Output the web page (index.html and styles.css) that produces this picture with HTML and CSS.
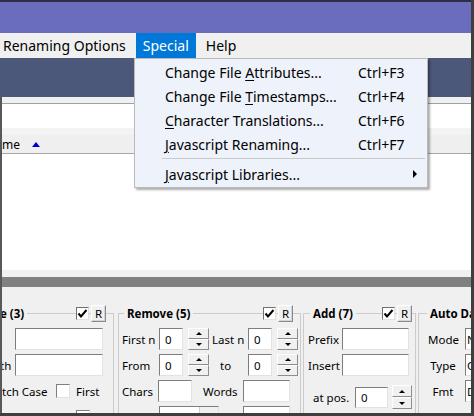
FILE: index.html
```html
<!DOCTYPE html>
<html>
<head>
<meta charset="utf-8">
<title>Bulk Rename</title>
<link rel="stylesheet" href="styles.css">
</head>
<body>
<div class="window">
  <div class="titlebar"></div>
  <div class="menubar">
    <span class="mitem">Renaming Options</span>
    <span class="mitem active">Special</span>
    <span class="mitem">Help</span>
  </div>
  <div class="toolband"></div>
  <div class="content">
    <div class="pathgap"></div>
    <div class="pathfield"></div>
    <div class="hdrgap"></div>
    <div class="listhdr"><span class="colname">me</span><span class="sort"></span></div>
    <div class="list"></div>
    <div class="splitgap"></div>
    <div class="splitter"></div>
    <div class="panel">
      <div class="groups">
        <div class="grp g1">
          <div class="ghead"><span class="gtitle">e (3)</span><span class="fill"></span><span class="chk"><svg width="13" height="13" viewBox="0 0 13 13"><path d="M2.5 6.5 L5 9.5 L10.5 3" fill="none" stroke="#000" stroke-width="2"/></svg></span><span class="rbtn">R</span></div>
          <div class="rows">
            <div class="row"><span class="lbl w15"></span><span class="inp w88"></span></div>
            <div class="row"><span class="lbl w15">th</span><span class="inp w88"></span></div>
            <div class="row"><span class="lbl w56 pl2">tch Case</span><span class="box"></span><span class="lbl ml6">First</span></div>
            <div class="row"><span class="lbl w76"></span><span class="box"></span></div>
          </div>
        </div>
        <div class="grp g2">
          <div class="ghead"><span class="gtitle">Remove (5)</span><span class="fill"></span><span class="chk"><svg width="13" height="13" viewBox="0 0 13 13"><path d="M2.5 6.5 L5 9.5 L10.5 3" fill="none" stroke="#000" stroke-width="2"/></svg></span><span class="rbtn">R</span></div>
          <div class="rows">
            <div class="row"><span class="lbl w37">First n</span><span class="inp w24">0</span><span class="spin"><span class="sb up"></span><span class="sb dn"></span></span><span class="lbl w39 pl3">Last n</span><span class="inp w24">0</span><span class="spin"><span class="sb up"></span><span class="sb dn"></span></span></div>
            <div class="row"><span class="lbl w37">From</span><span class="inp w24">0</span><span class="spin"><span class="sb up"></span><span class="sb dn"></span></span><span class="lbl w39 pl11">to</span><span class="inp w24">0</span><span class="spin"><span class="sb up"></span><span class="sb dn"></span></span></div>
            <div class="row"><span class="lbl w36">Chars</span><span class="inp w34"></span><span class="lbl w51 pl11">Words</span><span class="inp w47"></span></div>
            <div class="row"><span class="lbl w37"></span><span class="combo w60"><span class="ctext">Before</span><span class="cbtn"></span></span><span class="lbl w24"></span><span class="inp w47"></span></div>
          </div>
        </div>
        <div class="grp g3">
          <div class="ghead"><span class="gtitle">Add (7)</span><span class="fill"></span><span class="chk"><svg width="13" height="13" viewBox="0 0 13 13"><path d="M2.5 6.5 L5 9.5 L10.5 3" fill="none" stroke="#000" stroke-width="2"/></svg></span><span class="rbtn">R</span></div>
          <div class="rows">
            <div class="row"><span class="lbl w34">Prefix</span><span class="inp w67"></span></div>
            <div class="row"><span class="lbl w34">Insert</span><span class="inp w67"></span></div>
            <div class="row row-pos"><span class="lbl w47 pl5">at pos.</span><span class="inp w33 h21">0</span><span class="spin s20"><span class="sb up"></span><span class="sb dn"></span></span></div>
          </div>
        </div>
        <div class="grp g4">
          <div class="ghead"><span class="gtitle">Auto Da</span><span class="fill"></span></div>
          <div class="rows">
            <div class="row"><span class="lbl w30 ca">Mode</span><span class="inp w40 ml7 pl1">N</span></div>
            <div class="row"><span class="lbl w30 ca">Type</span><span class="inp w40 ml7 pl1">C</span></div>
            <div class="row"><span class="lbl w30 ca">Fmt</span><span class="inp w40 ml7 pl1">D</span></div>
          </div>
        </div>
      </div>
    </div>
  </div>
  <div class="dropdown">
    <div class="ditem"><span class="dl">Change File <u>A</u>ttributes...</span><span class="dk">Ctrl+F3</span><span class="dsub"></span></div>
    <div class="ditem"><span class="dl">Change File <u>T</u>imestamps...</span><span class="dk">Ctrl+F4</span><span class="dsub"></span></div>
    <div class="ditem"><span class="dl"><u>C</u>haracter Translations...</span><span class="dk">Ctrl+F6</span><span class="dsub"></span></div>
    <div class="ditem"><span class="dl"><u>J</u>avascript Renaming...</span><span class="dk">Ctrl+F7</span><span class="dsub"></span></div>
    <div class="dsep"></div>
    <div class="ditem"><span class="dl"><u>J</u>avascript Libraries...</span><span class="dk"></span><span class="dsub"><span class="arrow"></span></span></div>
  </div>
</div>
</body>
</html>
```

FILE: styles.css
```css
* { box-sizing: border-box; }
html, body { margin: 0; padding: 0; }
body {
  width: 474px;
  height: 416px;
  overflow: hidden;
  background: #f0f0f0;
  font-family: "Noto Sans", "Open Sans", sans-serif;
  color: #000;
}
.window {
  position: relative;
  width: 474px;
  height: 416px;
  display: flex;
  flex-direction: column;
  border-right: 3px solid #3e3e3e;
  border-bottom: 3px solid #3e3e3e;
  overflow: hidden;
}
.titlebar {
  flex: none;
  height: 33px;
  background: #6a6cbd;
  border-top: 2px solid #2d2d45;
}
.menubar {
  flex: none;
  height: 25px;
  background: #f0f0f0;
  display: flex;
  gap: 3px;
  margin-left: -4px;
  font-size: 14px;
}
.mitem {
  display: flex;
  align-items: center;
  padding: 0 7px;
  white-space: nowrap;
}
.mitem.active { background: #0078d7; color: #fff; }
.toolband {
  flex: none;
  height: 39px;
  background: #4b5879;
}
.content {
  flex: 1;
  min-height: 0;
  display: flex;
  flex-direction: column;
  border-left: 2px solid #585858;
}
.pathgap { flex: none; height: 6px; }
.pathfield {
  flex: none;
  height: 25px;
  background: #fff;
  border-top: 1px solid #a0a0a0;
}
.hdrgap { flex: none; height: 7px; background: #f3f3f3; }
.listhdr {
  flex: none;
  height: 19px;
  background: #efefef;
  border-bottom: 1px solid #a5a5a5;
  display: flex;
  align-items: center;
  font-size: 12px;
  white-space: nowrap;
}
.colname { margin-left: 0; }
.sort {
  margin-left: 12px;
  width: 0;
  height: 0;
  border-left: 4px solid transparent;
  border-right: 4px solid transparent;
  border-bottom: 5px solid #0000cc;
}
.list { flex: none; height: 116px; background: #fff; }
.splitgap { flex: none; height: 7px; }
.splitter { flex: none; height: 10px; background: #808080; }
.panel {
  flex: 1;
  min-height: 0;
  overflow: hidden;
  padding-top: 26px;
  font-size: 11.5px;
}
.groups {
  display: flex;
  align-items: flex-start;
  margin-left: -6px;
}
.grp {
  flex: none;
  height: 130px;
  border: 1px solid #cbcbcb;
}
.g1 { width: 118px; padding-left: 3px; }
.g2 { width: 183px; margin-left: 4px; padding-left: 3px; }
.g3 { width: 113px; margin-left: 2px; padding-left: 4px; }
.g4 { width: 100px; margin-left: 2px; padding-left: 9px; }
.ghead {
  display: flex;
  align-items: center;
  height: 17px;
  margin-top: -9px;
}
.g1 .ghead, .g2 .ghead { padding-right: 7px; }
.g3 .ghead { padding-right: 3px; }
.gtitle {
  font-weight: 700;
  background: #f0f0f0;
  padding: 0 3px;
  margin-left: 2px;
  white-space: nowrap;
  line-height: 15px;
}
.g1 .gtitle { margin-left: 0; padding-left: 0; }
.g4 .gtitle { margin-left: -1px; }
.fill { flex: 1; }
.chk {
  width: 13px;
  height: 13px;
  background: #fff;
  border-top: 1px solid #707070;
  border-left: 1px solid #707070;
  border-right: 1px solid #e0e0e0;
  border-bottom: 1px solid #e0e0e0;
  display: flex;
  align-items: center;
  justify-content: center;
}
.chk svg { display: block; flex: none; }
.rbtn {
  width: 15px;
  height: 17px;
  margin-left: 2px;
  background: #f0f0f0;
  border-top: 1px solid #fff;
  border-left: 1px solid #fff;
  border-right: 1px solid #8a8a8a;
  border-bottom: 1px solid #8a8a8a;
  box-shadow: inset -1px -1px 0 #d4d4d4;
  font-size: 11.5px;
  display: flex;
  align-items: center;
  justify-content: center;
  line-height: 1;
}
.rows {
  display: flex;
  flex-direction: column;
  gap: 4px;
  margin-top: 6px;
}
.row {
  display: flex;
  align-items: center;
  height: 22px;
  white-space: nowrap;
}
.row-pos { margin-top: 5px; height: 24px; }
.lbl { flex: none; display: block; }
.ca { text-align: center; }
.inp {
  flex: none;
  height: 22px;
  background: #fff;
  border-top: 1px solid #7d7d7d;
  border-left: 1px solid #7d7d7d;
  border-right: 1px solid #e2e2e2;
  border-bottom: 1px solid #e2e2e2;
  padding-left: 5px;
  display: flex;
  align-items: center;
  overflow: hidden;
}
.h21 { height: 21px; }
.spin {
  flex: none;
  width: 21px;
  height: 22px;
  margin-left: 5px;
  display: flex;
  flex-direction: column;
}
.spin.s20 { width: 20px; height: 24px; margin-left: 4px; }
.sb {
  flex: 1;
  background: #f0f0f0;
  border-top: 1px solid #fff;
  border-left: 1px solid #fff;
  border-right: 1px solid #8c8c8c;
  border-bottom: 1px solid #8c8c8c;
  display: flex;
  align-items: center;
  justify-content: center;
}
.sb::before {
  content: "";
  width: 0;
  height: 0;
  border-left: 3px solid transparent;
  border-right: 3px solid transparent;
}
.sb.up::before { border-bottom: 3px solid #000; }
.sb.dn::before { border-top: 3px solid #000; }
.box {
  flex: none;
  width: 14px;
  height: 14px;
  background: #fff;
  border-top: 1px solid #7d7d7d;
  border-left: 1px solid #7d7d7d;
  border-right: 1px solid #e2e2e2;
  border-bottom: 1px solid #e2e2e2;
}
.combo {
  flex: none;
  height: 22px;
  background: #fff;
  border-top: 1px solid #7d7d7d;
  border-left: 1px solid #7d7d7d;
  border-right: 1px solid #e2e2e2;
  border-bottom: 1px solid #e2e2e2;
  display: flex;
}
.ctext { flex: 1; padding-left: 3px; display: flex; align-items: center; }
.cbtn { width: 19px; background: #f0f0f0; border-left: 1px solid #d0d0d0; }
.w15 { width: 15px; }
.w24 { width: 24px; }
.w30 { width: 30px; }
.w33 { width: 33px; }
.w34 { width: 34px; }
.w36 { width: 36px; }
.w37 { width: 37px; }
.w39 { width: 39px; }
.w40 { width: 40px; }
.w47 { width: 47px; }
.w51 { width: 51px; }
.w56 { width: 56px; }
.w60 { width: 60px; }
.w67 { width: 67px; }
.w76 { width: 76px; }
.w88 { width: 88px; }
.pl1 { padding-left: 1px; }
.pl2 { padding-left: 2px; }
.pl3 { padding-left: 3px; }
.pl5 { padding-left: 5px; }
.pl11 { padding-left: 11px; }
.ml6 { margin-left: 6px; }
.ml7 { margin-left: 7px; }

.dropdown {
  position: absolute;
  left: 134px;
  top: 58px;
  width: 294px;
  padding: 1px 0;
  background: #eef2fb;
  border: 1px solid #b9b9b9;
  box-shadow: 2px 2px 2px rgba(0, 0, 0, 0.32);
  font-size: 14px;
}
.ditem {
  display: grid;
  grid-template-columns: 193px 47px 22px;
  padding-left: 30px;
  height: 24px;
  align-items: center;
  white-space: nowrap;
}
.ditem u { text-underline-offset: 2px; text-decoration-thickness: 1px; }
.dsep {
  height: 1px;
  background: #c9c9c9;
  margin: 2px 2px 3px 27px;
}
.dsub { display: flex; align-items: center; }
.arrow {
  margin-left: 8px;
  width: 0;
  height: 0;
  border-left: 4px solid #000;
  border-top: 4px solid transparent;
  border-bottom: 4px solid transparent;
}
```
